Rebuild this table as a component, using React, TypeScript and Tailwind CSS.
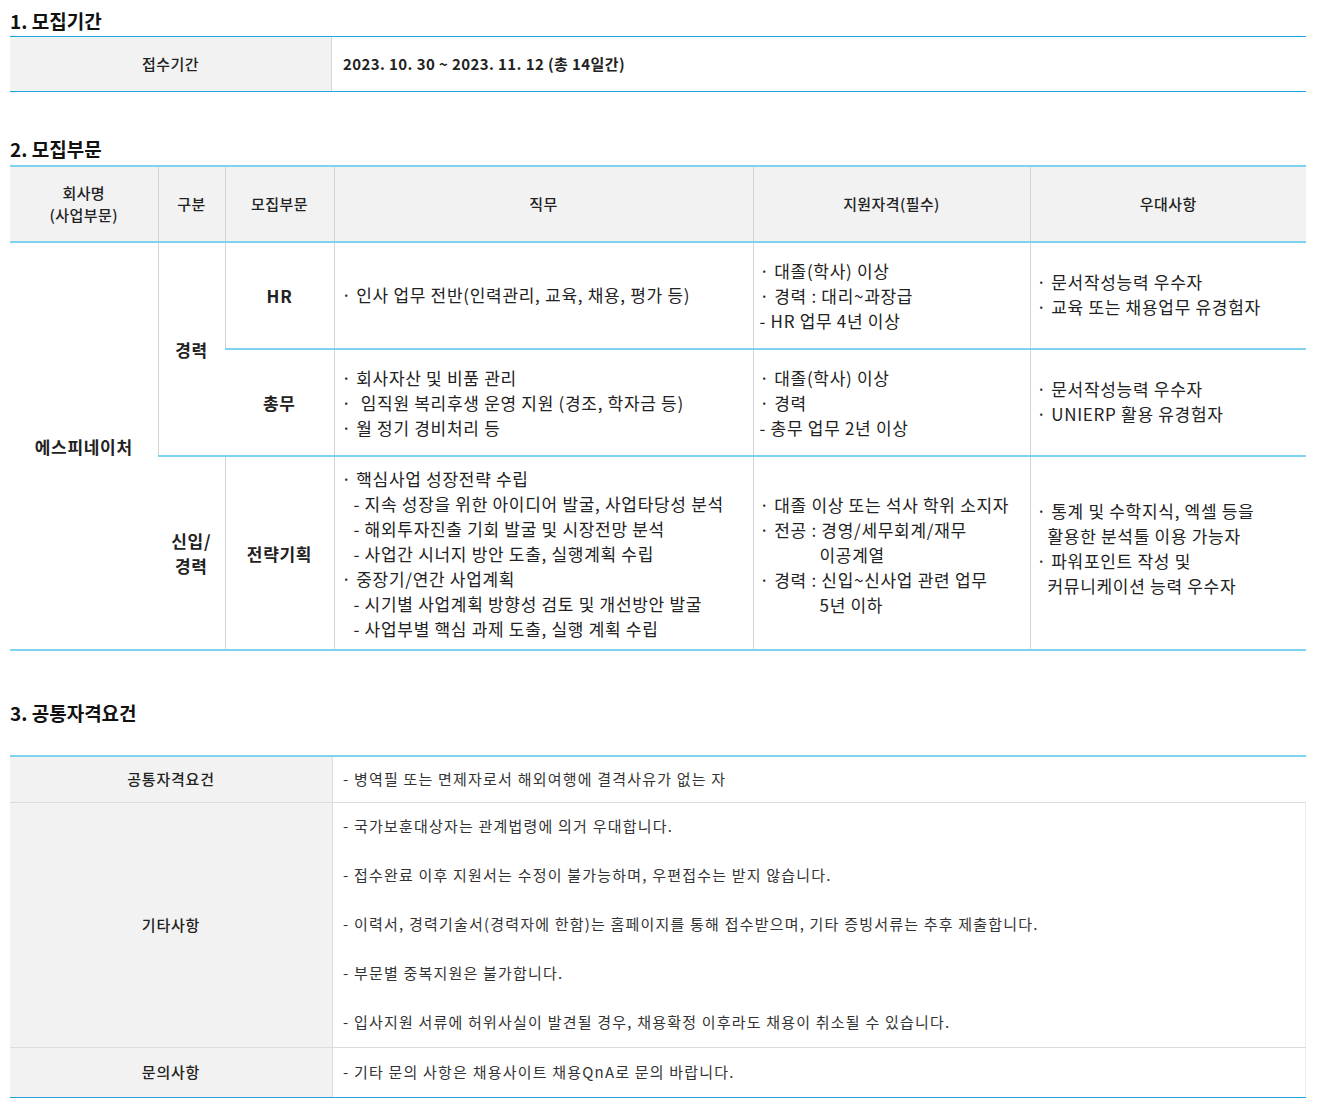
import React from "react";

const font = { fontFamily: '"Malgun Gothic", "Noto Sans CJK KR", "Noto Sans", sans-serif' };

function Title({ children }: { children: React.ReactNode }) {
  return <h2 className="text-[19px] font-bold text-[#111] leading-[24px]">{children}</h2>;
}

const cellBorder = "border-l border-[#d4d4d4] first:border-l-0";

export default function App() {
  return (
    <div className="bg-white text-[#222] px-[10px] pt-[9px] pb-6 w-[1316px]" style={font}>
      {/* 1. 모집기간 */}
      <Title>1. 모집기간</Title>
      <div className="mt-[3px] border-t border-b border-[#1fa6e0] flex h-[56px] text-[15px] tracking-[0.4px]">
        <div className="w-[322px] bg-[#f2f2f2] border-r border-[#d8d8d8] flex items-center justify-center font-medium">
          접수기간
        </div>
        <div className="flex-1 flex items-center pl-[11px] font-bold">
          2023. 10. 30 ~ 2023. 11. 12 (총 14일간)
        </div>
      </div>

      {/* 2. 모집부문 */}
      <div className="mt-[45px]">
        <Title>2. 모집부문</Title>
      </div>
      <table className="mt-[4px] w-[1296px] border-collapse table-fixed">
        <colgroup>
          <col className="w-[148px]" />
          <col className="w-[67px]" />
          <col className="w-[109px]" />
          <col className="w-[419px]" />
          <col className="w-[277px]" />
          <col className="w-[276px]" />
        </colgroup>
        <thead>
          <tr className="h-[76px] bg-[#f2f2f2] text-[15px] tracking-[0.4px] font-medium border-t-2 border-b-2 border-[#80d2f1]">
            <th className={`${cellBorder} font-medium leading-[22px]`}>
              회사명
              <br />
              (사업부문)
            </th>
            <th className={`${cellBorder} font-medium`}>구분</th>
            <th className={`${cellBorder} font-medium`}>모집부문</th>
            <th className={`${cellBorder} font-medium`}>직무</th>
            <th className={`${cellBorder} font-medium`}>지원자격(필수)</th>
            <th className={`${cellBorder} font-medium`}>우대사항</th>
          </tr>
        </thead>
        <tbody className="text-[17px] tracking-[0.7px] leading-[25px]">
          <tr className="h-[107px] border-b-2 border-[#80d2f1]">
            <td rowSpan={3} className="text-center font-bold">에스피네이처</td>
            <td rowSpan={2} className={`${cellBorder} text-center font-bold`}>경력</td>
            <td className={`${cellBorder} text-center font-bold`}>HR</td>
            <td className={`${cellBorder} pl-[7px] pb-[2px]`}>· 인사 업무 전반(인력관리, 교육, 채용, 평가 등)</td>
            <td className={`${cellBorder} pl-[6px]`}>
              <div>· 대졸(학사) 이상</div>
              <div>· 경력 : 대리~과장급</div>
              <div>- HR 업무 4년 이상</div>
            </td>
            <td className={`${cellBorder} pl-[6px] pb-[4px]`}>
              <div>· 문서작성능력 우수자</div>
              <div>· 교육 또는 채용업무 유경험자</div>
            </td>
          </tr>
          <tr className="h-[107px] border-b-2 border-[#80d2f1]">
            <td className={`${cellBorder} text-center font-bold`}>총무</td>
            <td className={`${cellBorder} pl-[7px] whitespace-pre`}>
              <div>· 회사자산 및 비품 관리</div>
              <div>·  임직원 복리후생 운영 지원 (경조, 학자금 등)</div>
              <div>· 월 정기 경비처리 등</div>
            </td>
            <td className={`${cellBorder} pl-[6px]`}>
              <div>· 대졸(학사) 이상</div>
              <div>· 경력</div>
              <div>- 총무 업무 2년 이상</div>
            </td>
            <td className={`${cellBorder} pl-[6px] pb-[4px]`}>
              <div>· 문서작성능력 우수자</div>
              <div>· UNIERP 활용 유경험자</div>
            </td>
          </tr>
          <tr className="h-[194px] border-b-2 border-[#80d2f1]">
            <td className={`${cellBorder} text-center font-bold`}>
              신입/
              <br />
              경력
            </td>
            <td className={`${cellBorder} text-center font-bold`}>전략기획</td>
            <td className={`${cellBorder} pl-[7px]`}>
              <div>· 핵심사업 성장전략 수립</div>
              <div className="pl-[12px]">- 지속 성장을 위한 아이디어 발굴, 사업타당성 분석</div>
              <div className="pl-[12px]">- 해외투자진출 기회 발굴 및 시장전망 분석</div>
              <div className="pl-[12px]">- 사업간 시너지 방안 도출, 실행계획 수립</div>
              <div>· 중장기/연간 사업계획</div>
              <div className="pl-[12px]">- 시기별 사업계획 방향성 검토 및 개선방안 발굴</div>
              <div className="pl-[12px]">- 사업부별 핵심 과제 도출, 실행 계획 수립</div>
            </td>
            <td className={`${cellBorder} pl-[6px] pt-[2px]`}>
              <div>· 대졸 이상 또는 석사 학위 소지자</div>
              <div>· 전공 : 경영/세무회계/재무</div>
              <div className="pl-[60px]">이공계열</div>
              <div>· 경력 : 신입~신사업 관련 업무</div>
              <div className="pl-[60px]">5년 이하</div>
            </td>
            <td className={`${cellBorder} pl-[6px] pb-[10px]`}>
              <div>· 통계 및 수학지식, 엑셀 등을</div>
              <div className="pl-[11px]">활용한 분석툴 이용 가능자</div>
              <div>· 파워포인트 작성 및</div>
              <div className="pl-[11px]">커뮤니케이션 능력 우수자</div>
            </td>
          </tr>
        </tbody>
      </table>

      {/* 3. 공통자격요건 */}
      <div className="mt-[50px]">
        <Title>3. 공통자격요건</Title>
      </div>
      <div className="mt-[30px] border-t-2 border-[#80d2f1] border-b border-b-[#22a1dc] text-[15px]">
        <div className="flex h-[46px] border-b border-[#dcdcdc]">
          <div className="w-[323px] bg-[#f2f2f2] border-r border-[#dcdcdc] flex items-center justify-center font-medium tracking-[0.8px]">
            공통자격요건
          </div>
          <div className="flex-1 flex items-center pl-[10px] text-[#333] tracking-[1.2px]">
            - 병역필 또는 면제자로서 해외여행에 결격사유가 없는 자
          </div>
        </div>
        <div className="flex h-[245px] border-b border-[#dcdcdc]">
          <div className="w-[323px] bg-[#f2f2f2] border-r border-[#dcdcdc] flex items-center justify-center font-medium tracking-[0.8px]">
            기타사항
          </div>
          <div className="flex-1 flex flex-col justify-center gap-[25px] pl-[10px] pb-[3px] leading-[24px] text-[#333] tracking-[1.2px] border-r border-[#ececec]">
            <p>- 국가보훈대상자는 관계법령에 의거 우대합니다.</p>
            <p>- 접수완료 이후 지원서는 수정이 불가능하며, 우편접수는 받지 않습니다.</p>
            <p>- 이력서, 경력기술서(경력자에 한함)는 홈페이지를 통해 접수받으며, 기타 증빙서류는 추후 제출합니다.</p>
            <p>- 부문별 중복지원은 불가합니다.</p>
            <p>- 입사지원 서류에 허위사실이 발견될 경우, 채용확정 이후라도 채용이 취소될 수 있습니다.</p>
          </div>
        </div>
        <div className="flex h-[49px]">
          <div className="w-[323px] bg-[#f2f2f2] border-r border-[#dcdcdc] flex items-center justify-center font-medium tracking-[0.8px]">
            문의사항
          </div>
          <div className="flex-1 flex items-center pl-[10px] text-[#333] tracking-[1.2px] border-r border-[#ececec]">
            - 기타 문의 사항은 채용사이트 채용QnA로 문의 바랍니다.
          </div>
        </div>
      </div>
    </div>
  );
}
